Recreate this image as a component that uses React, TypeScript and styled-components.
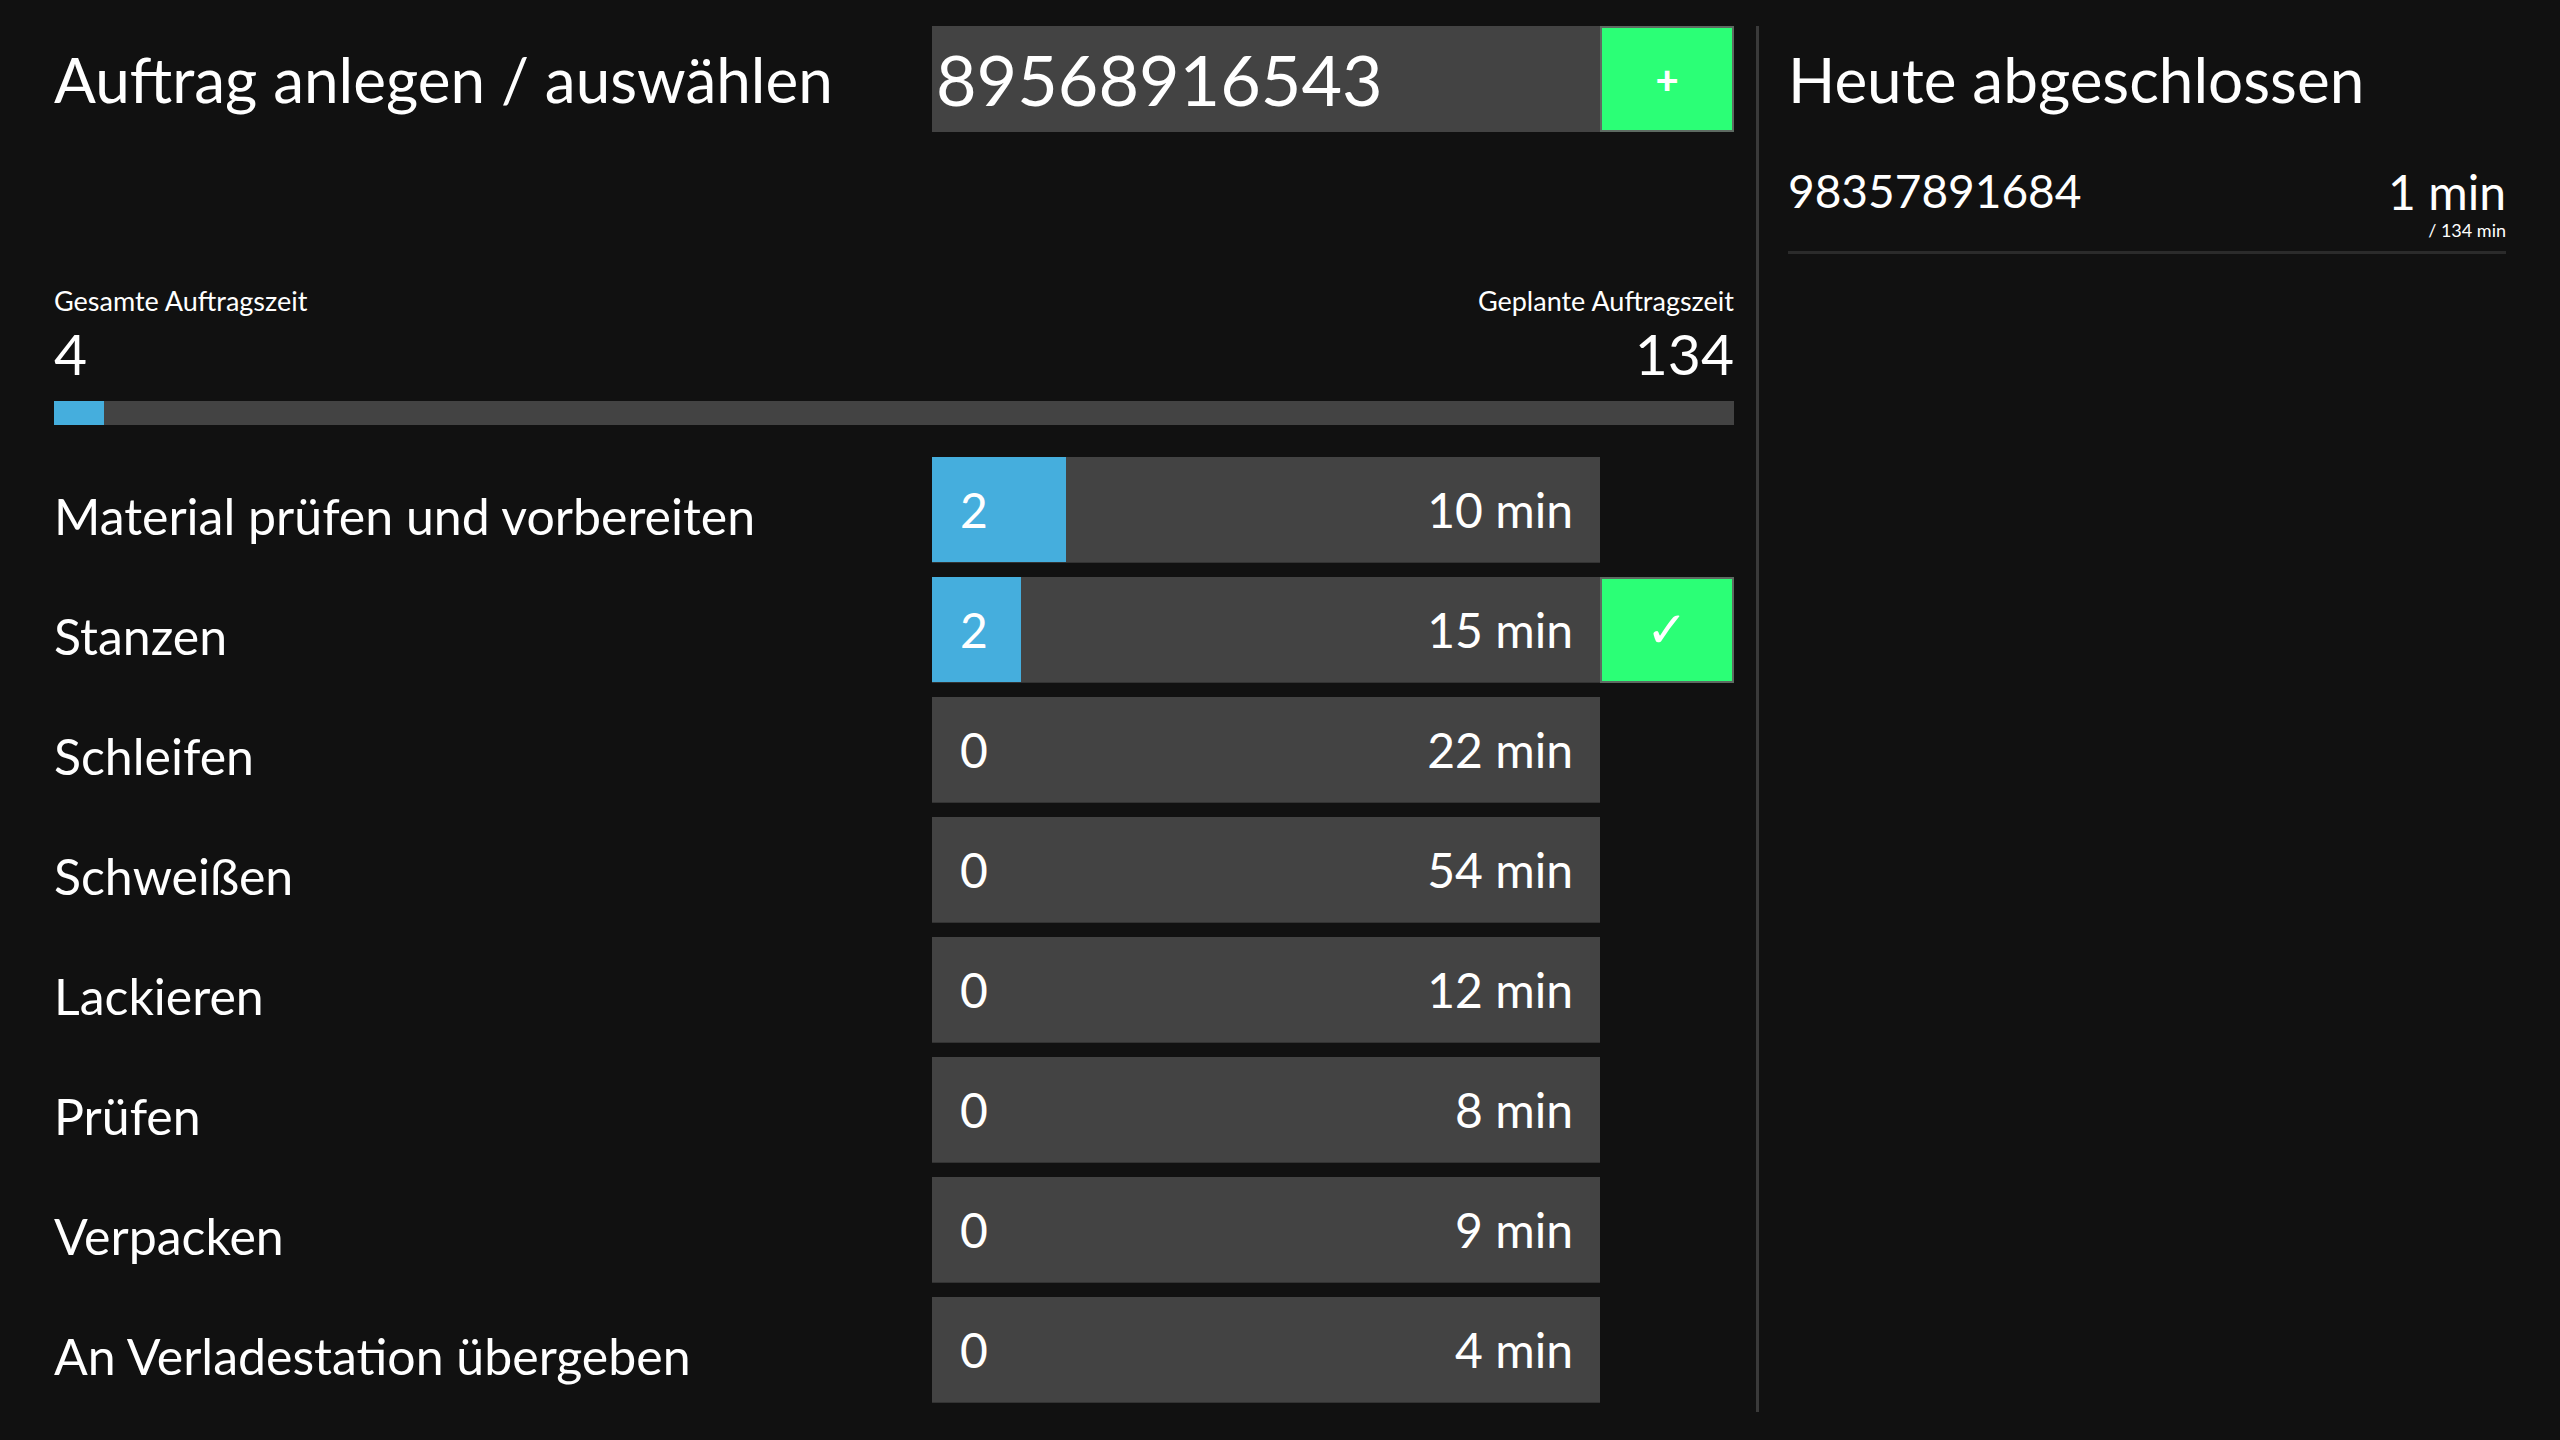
import React from "react";
import styled, { createGlobalStyle } from "styled-components";

interface Step {
  name: string;
  done: number;
  planned: number;
  active?: boolean;
}

const steps: Step[] = [
  { name: "Material prüfen und vorbereiten", done: 2, planned: 10 },
  { name: "Stanzen", done: 2, planned: 15, active: true },
  { name: "Schleifen", done: 0, planned: 22 },
  { name: "Schweißen", done: 0, planned: 54 },
  { name: "Lackieren", done: 0, planned: 12 },
  { name: "Prüfen", done: 0, planned: 8 },
  { name: "Verpacken", done: 0, planned: 9 },
  { name: "An Verladestation übergeben", done: 0, planned: 4 },
];

const totalDone = steps.reduce((s, v) => s + v.done, 0);
const totalPlanned = steps.reduce((s, v) => s + v.planned, 0);

function App() {
  return (
    <>
      <GlobalStyle />
      <Page>
        <LeftPanel>
          <Header>
            <Title>Auftrag anlegen / auswählen</Title>
            <OrderInput defaultValue="89568916543" />
            <GreenButton $small>+</GreenButton>
          </Header>

          <Stats>
            <StatsRow>
              <StatBlock>
                <StatLabel>Gesamte Auftragszeit</StatLabel>
                <StatValue>{totalDone}</StatValue>
              </StatBlock>
              <StatBlock $right>
                <StatLabel>Geplante Auftragszeit</StatLabel>
                <StatValue>{totalPlanned}</StatValue>
              </StatBlock>
            </StatsRow>
            <Track>
              <Fill style={{ width: `${(totalDone / totalPlanned) * 100}%` }} />
            </Track>
          </Stats>

          <StepList>
            {steps.map(step => (
              <StepRow key={step.name}>
                <StepLabel>{step.name}</StepLabel>
                <StepBar>
                  <Fill style={{ width: `${(step.done / step.planned) * 100}%` }} />
                  <BarText>{step.done}</BarText>
                  <BarText>{step.planned} min</BarText>
                </StepBar>
                {step.active && <GreenButton>✓</GreenButton>}
              </StepRow>
            ))}
          </StepList>
        </LeftPanel>

        <Divider />

        <RightPanel>
          <RightHeader>
            <Title>Heute abgeschlossen</Title>
          </RightHeader>
          <DoneItem>
            <DoneNumber>98357891684</DoneNumber>
            <DoneTime>
              <span>1 min</span>
              <small>/ 134 min</small>
            </DoneTime>
          </DoneItem>
        </RightPanel>
      </Page>
    </>
  );
}

const GlobalStyle = createGlobalStyle`
  html, body {
    margin: 0;
    background: #111111;
  }
  body {
    font-family: Lato, "Open Sans", sans-serif;
    color: #ffffff;
  }
`;

const Page = styled.div`
  display: flex;
  box-sizing: border-box;
  height: 100vh;
  padding: 26px 54px 28px;
`;

const LeftPanel = styled.div`
  width: 1680px;
  display: flex;
  flex-direction: column;
`;

const Divider = styled.div`
  width: 3px;
  margin: 0 29px 0 22px;
  background-color: #3a3a3a;
`;

const RightPanel = styled.div`
  flex: 1;
  display: flex;
  flex-direction: column;
`;

const Header = styled.div`
  display: grid;
  grid-template-columns: 1fr 668px 134px;
  height: 106px;
  align-items: center;
`;

const RightHeader = styled.div`
  display: flex;
  align-items: center;
  height: 106px;
`;

const Title = styled.h1`
  margin: 0;
  font-size: 62px;
  font-weight: 400;
  line-height: 1;
`;

const OrderInput = styled.input`
  box-sizing: border-box;
  height: 100%;
  width: 100%;
  padding: 0 4px;
  border: none;
  outline: none;
  background-color: #434343;
  color: #ffffff;
  font-family: inherit;
  font-size: 70px;
`;

const GreenButton = styled.button<{ $small?: boolean }>`
  box-sizing: border-box;
  height: 100%;
  width: 100%;
  padding: 0;
  border: 2px solid #5e6a62;
  background-color: #2bff76;
  color: #ffffff;
  font-family: ${p => (p.$small ? "Lato, sans-serif" : '"DejaVu Sans", sans-serif')};
  font-size: ${p => (p.$small ? "40px" : "50px")};
  font-weight: ${p => (p.$small ? 900 : 400)};
  cursor: pointer;
`;

const Stats = styled.div`
  margin-top: 155px;
`;

const StatsRow = styled.div`
  display: flex;
  justify-content: space-between;
`;

const StatBlock = styled.div<{ $right?: boolean }>`
  display: flex;
  flex-direction: column;
  align-items: ${p => (p.$right ? "flex-end" : "flex-start")};
`;

const StatLabel = styled.div`
  font-size: 27px;
  line-height: 1;
`;

const StatValue = styled.div`
  margin-top: 11px;
  font-size: 57px;
  line-height: 1;
`;

const Track = styled.div`
  position: relative;
  height: 24px;
  margin-top: 19px;
  background-color: #434343;
  overflow: hidden;
`;

const Fill = styled.div`
  position: absolute;
  top: 0;
  left: 0;
  bottom: 0;
  background-color: #45aedd;
`;

const StepList = styled.div`
  display: flex;
  flex-direction: column;
  gap: 14px;
  margin-top: 32px;
`;

const StepRow = styled.div`
  display: grid;
  grid-template-columns: 1fr 668px 134px;
  height: 106px;
  align-items: center;
`;

const StepLabel = styled.div`
  padding-top: 12px;
  font-size: 50px;
  line-height: 1;
`;

const StepBar = styled.div`
  position: relative;
  box-sizing: border-box;
  height: 100%;
  display: flex;
  align-items: center;
  justify-content: space-between;
  padding: 0 27px 0 28px;
  background-color: #434343;
  border-bottom: 1px solid #333333;
  overflow: hidden;
`;

const BarText = styled.span`
  position: relative;
  font-size: 48px;
  line-height: 1;
`;

const DoneItem = styled.div`
  display: flex;
  justify-content: space-between;
  align-items: flex-start;
  margin-top: 36px;
  padding-bottom: 12px;
  border-bottom: 3px solid #2b2b2b;
`;

const DoneNumber = styled.div`
  font-size: 46px;
  line-height: 1;
`;

const DoneTime = styled.div`
  display: flex;
  flex-direction: column;
  align-items: flex-end;
  font-size: 48px;
  line-height: 1;

  & > small {
    margin-top: 5px;
    font-size: 18px;
  }
`;

export default App;
